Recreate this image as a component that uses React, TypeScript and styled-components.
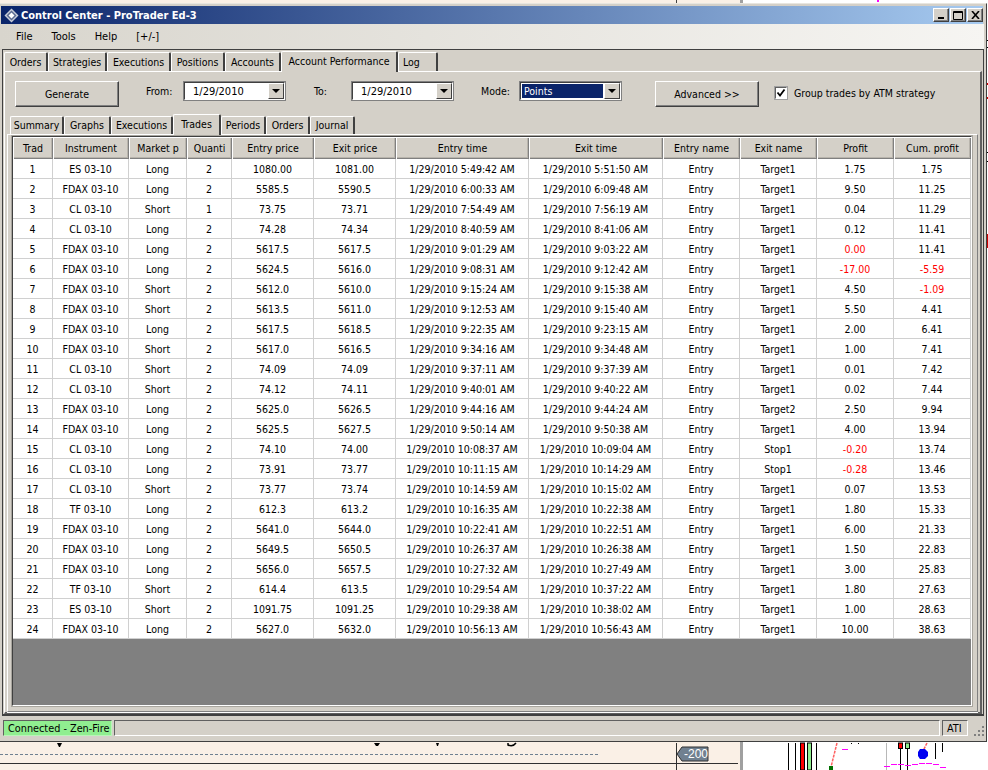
import React from 'react';
import styled, { createGlobalStyle } from 'styled-components';

// Trade rows as shown on the Trades tab
type Trade = [string, string, string, string, string, string, string, string, string, string, string];

const D = '1/29/2010 ';
const trades: Trade[] = [
  ['ES 03-10', 'Long', '2', '1080.00', '1081.00', '5:49:42 AM', '5:51:50 AM', 'Entry', 'Target1', '1.75', '1.75'],
  ['FDAX 03-10', 'Long', '2', '5585.5', '5590.5', '6:00:33 AM', '6:09:48 AM', 'Entry', 'Target1', '9.50', '11.25'],
  ['CL 03-10', 'Short', '1', '73.75', '73.71', '7:54:49 AM', '7:56:19 AM', 'Entry', 'Target1', '0.04', '11.29'],
  ['CL 03-10', 'Long', '2', '74.28', '74.34', '8:40:59 AM', '8:41:06 AM', 'Entry', 'Target1', '0.12', '11.41'],
  ['FDAX 03-10', 'Long', '2', '5617.5', '5617.5', '9:01:29 AM', '9:03:22 AM', 'Entry', 'Target1', '0.00', '11.41'],
  ['FDAX 03-10', 'Long', '2', '5624.5', '5616.0', '9:08:31 AM', '9:12:42 AM', 'Entry', 'Target1', '-17.00', '-5.59'],
  ['FDAX 03-10', 'Short', '2', '5612.0', '5610.0', '9:15:24 AM', '9:15:38 AM', 'Entry', 'Target1', '4.50', '-1.09'],
  ['FDAX 03-10', 'Short', '2', '5613.5', '5611.0', '9:12:53 AM', '9:15:40 AM', 'Entry', 'Target1', '5.50', '4.41'],
  ['FDAX 03-10', 'Long', '2', '5617.5', '5618.5', '9:22:35 AM', '9:23:15 AM', 'Entry', 'Target1', '2.00', '6.41'],
  ['FDAX 03-10', 'Short', '2', '5617.0', '5616.5', '9:34:16 AM', '9:34:48 AM', 'Entry', 'Target1', '1.00', '7.41'],
  ['CL 03-10', 'Short', '2', '74.09', '74.09', '9:37:11 AM', '9:37:39 AM', 'Entry', 'Target1', '0.01', '7.42'],
  ['CL 03-10', 'Short', '2', '74.12', '74.11', '9:40:01 AM', '9:40:22 AM', 'Entry', 'Target1', '0.02', '7.44'],
  ['FDAX 03-10', 'Long', '2', '5625.0', '5626.5', '9:44:16 AM', '9:44:24 AM', 'Entry', 'Target2', '2.50', '9.94'],
  ['FDAX 03-10', 'Long', '2', '5625.5', '5627.5', '9:50:14 AM', '9:50:38 AM', 'Entry', 'Target1', '4.00', '13.94'],
  ['CL 03-10', 'Long', '2', '74.10', '74.00', '10:08:37 AM', '10:09:04 AM', 'Entry', 'Stop1', '-0.20', '13.74'],
  ['CL 03-10', 'Long', '2', '73.91', '73.77', '10:11:15 AM', '10:14:29 AM', 'Entry', 'Stop1', '-0.28', '13.46'],
  ['CL 03-10', 'Short', '2', '73.77', '73.74', '10:14:59 AM', '10:15:02 AM', 'Entry', 'Target1', '0.07', '13.53'],
  ['TF 03-10', 'Long', '2', '612.3', '613.2', '10:16:35 AM', '10:22:38 AM', 'Entry', 'Target1', '1.80', '15.33'],
  ['FDAX 03-10', 'Long', '2', '5641.0', '5644.0', '10:22:41 AM', '10:22:51 AM', 'Entry', 'Target1', '6.00', '21.33'],
  ['FDAX 03-10', 'Long', '2', '5649.5', '5650.5', '10:26:37 AM', '10:26:38 AM', 'Entry', 'Target1', '1.50', '22.83'],
  ['FDAX 03-10', 'Long', '2', '5656.0', '5657.5', '10:27:32 AM', '10:27:49 AM', 'Entry', 'Target1', '3.00', '25.83'],
  ['TF 03-10', 'Short', '2', '614.4', '613.5', '10:29:54 AM', '10:37:22 AM', 'Entry', 'Target1', '1.80', '27.63'],
  ['ES 03-10', 'Short', '2', '1091.75', '1091.25', '10:29:38 AM', '10:38:02 AM', 'Entry', 'Target1', '1.00', '28.63'],
  ['FDAX 03-10', 'Long', '2', '5627.0', '5632.0', '10:56:13 AM', '10:56:43 AM', 'Entry', 'Target1', '10.00', '38.63'],
];

const columns = ['Trad', 'Instrument', 'Market p', 'Quanti', 'Entry price', 'Exit price', 'Entry time', 'Exit time', 'Entry name', 'Exit name', 'Profit', 'Cum. profit'];
const outerTabs = [['Orders', 44], ['Strategies', 59], ['Executions', 64], ['Positions', 54], ['Accounts', 56]] as const;
const innerLeft = [['Summary', 54], ['Graphs', 47], ['Executions', 62]] as const;
const innerRight = [['Periods', 45], ['Orders', 44], ['Journal', 45]] as const;

const GlobalStyle = createGlobalStyle`
  html, body {
    margin: 0;
    padding: 0;
    background: #fff;
    overflow: hidden;
  }
  * {
    box-sizing: border-box;
  }
`;

const Desktop = styled.div`
  position: relative;
  width: 988px;
  height: 770px;
  overflow: hidden;
  font-family: 'DejaVu Sans Condensed', 'Liberation Sans', sans-serif;
  font-size: 10.5px;
  color: #000;
`;

const Backdrop = styled.svg`
  position: absolute;
  left: 0;
  top: 0;
`;

const Window = styled.div`
  position: absolute;
  left: 0;
  top: 3px;
  width: 987px;
  height: 739px;
  display: flex;
  flex-direction: column;
  background: #d4d0c8;
  border-top: 1px solid #e8e6e0;
  border-right: 1px solid #404040;
  border-bottom: 1px solid #404040;
`;

const TitleBar = styled.div`
  height: 18px;
  margin: 2px 3px 0 1px;
  padding-left: 3px;
  display: flex;
  align-items: center;
  gap: 2px;
  background: linear-gradient(to right, #0a246a, #a6caf0);
  color: #fff;
  font-weight: bold;
  font-size: 11px;
`;

const TitleText = styled.span`
  flex: 1;
`;

const CaptionButtons = styled.div`
  display: flex;
  gap: 1px;
`;

const CaptionButton = styled.button`
  width: 16px;
  height: 14px;
  padding: 0;
  display: flex;
  align-items: center;
  justify-content: center;
  background: #d4d0c8;
  border: 1px solid;
  border-color: #fff #404040 #404040 #fff;
  box-shadow: inset -1px -1px 0 #808080;
`;

const MenuBar = styled.div`
  height: 25px;
  margin-right: 2px;
  padding-left: 16px;
  display: flex;
  align-items: center;
  gap: 19px;
  background: linear-gradient(to right, #d8d5cd, #f6f5f2);
  font-size: 11px;
`;

const MenuItem = styled.span`
  padding-bottom: 1px;
`;

const OuterFrame = styled.div`
  flex: 1;
  margin: 0 2px 0 2px;
  min-height: 0;
  display: flex;
  flex-direction: column;
  border: 1px solid #404040;
  border-bottom-width: 2px;
`;

const TabStrip = styled.div<{ $height: number; $pad: number }>`
  height: ${(p) => p.$height}px;
  padding-left: ${(p) => p.$pad}px;
  display: flex;
  align-items: flex-end;
  flex-shrink: 0;
`;

const Tab = styled.div<{ $w: number; $active?: boolean; $h: number; $lift?: number; $start?: boolean }>`
  width: ${(p) => p.$w}px;
  height: ${(p) => p.$h}px;
  display: flex;
  align-items: center;
  justify-content: ${(p) => (p.$start ? 'flex-start' : 'center')};
  padding-left: ${(p) => (p.$start ? 4 : 0)}px;
  padding-bottom: ${(p) => p.$lift ?? 0}px;
  background: #d4d0c8;
  border-top: 1px solid #fff;
  border-left: 1px solid #fff;
  border-right: 2px solid #404040;
  border-radius: 2px 2px 0 0;
  position: relative;
  z-index: ${(p) => (p.$active ? 1 : 0)};
  margin-bottom: ${(p) => (p.$active ? -1 : 0)}px;
  white-space: nowrap;
`;

const OuterPanel = styled.div`
  flex: 1;
  min-height: 0;
  margin: 0 1px;
  display: flex;
  flex-direction: column;
  border-top: 1px solid #fff;
  border-left: 1px solid #fff;
  border-right: 2px solid #606060;
  border-bottom: 2px solid #606060;
`;

const Toolbar = styled.div`
  height: 41px;
  padding: 9px 0 0 10px;
  display: flex;
  align-items: flex-start;
  flex-shrink: 0;
`;

const PushButton = styled.button<{ $left?: number }>`
  width: 104px;
  height: 26px;
  margin-left: ${(p) => p.$left ?? 0}px;
  padding: 0;
  background: #d4d0c8;
  font: inherit;
  color: #000;
  border: 1px solid;
  border-color: #fff #404040 #404040 #fff;
  box-shadow: inset -1px -1px 0 #808080;
`;

const FieldLabel = styled.span<{ $left: number; $width: number }>`
  width: ${(p) => p.$width}px;
  margin-left: ${(p) => p.$left}px;
  line-height: 20px;
`;

const Combo = styled.div<{ $width: number }>`
  width: ${(p) => p.$width}px;
  height: 20px;
  display: flex;
  align-items: stretch;
  background: #fff;
  border: 2px solid;
  border-color: #404040 #fff #fff #404040;
  outline: 1px solid #808080;
  outline-offset: -1px;
`;

const ComboValue = styled.span<{ $selected?: boolean }>`
  flex: 1;
  margin: ${(p) => (p.$selected ? '1px' : 0)};
  padding-left: ${(p) => (p.$selected ? 2 : 8)}px;
  line-height: ${(p) => (p.$selected ? 14 : 17)}px;
  font-size: ${(p) => (p.$selected ? 10.5 : 11)}px;
  color: ${(p) => (p.$selected ? '#fff' : '#000')};
  background: ${(p) => (p.$selected ? '#0a246a' : '#fff')};
`;

const ComboArrow = styled.span`
  width: 16px;
  display: flex;
  align-items: center;
  justify-content: center;
  background: #d4d0c8;
  border: 1px solid;
  border-color: #fff #404040 #404040 #fff;
  &::after {
    content: '';
    border-style: solid;
    border-width: 4px 4px 0 4px;
    border-color: #000 transparent transparent transparent;
  }
`;

const CheckRow = styled.label`
  margin: 6px 0 0 16px;
  display: flex;
  align-items: center;
  gap: 7px;
`;

const CheckBox = styled.span`
  width: 12px;
  height: 12px;
  display: flex;
  align-items: center;
  justify-content: center;
  background: #fff;
  border: 1px solid;
  border-color: #606060 #fff #fff #606060;
  outline: 1px solid #a0a0a0;
`;

const InnerPanel = styled.div`
  flex: 1;
  min-height: 0;
  margin: 0 2px 0 2px;
  padding: 1px 1px 1px 0;
  display: flex;
  flex-direction: column;
  border: 1px solid;
  border-color: #fff #808080 #808080 #fff;
  box-shadow: 0 1px 0 #fff;
`;

const GridFrame = styled.div`
  flex: 1;
  min-height: 0;
  margin: 0 4px 4px 4px;
  display: flex;
  flex-direction: column;
  background: #808080;
  border: 1px solid;
  border-color: #404040 #fff #fff #404040;
  outline: 1px solid #a8a59e;
`;

const GridRow = styled.div`
  display: grid;
  grid-template-columns: 40px 76px 58px 45px 82px 82px 133px 134px 77px 77px 77px 77px;
`;

const HeaderCell = styled.div`
  height: 22px;
  line-height: 22px;
  text-align: center;
  overflow: hidden;
  white-space: nowrap;
  background: #d4d0c8;
  box-shadow: inset 1px 1px 0 #fff, inset -1px -1px 0 #808080, inset -2px -2px 0 #b8b4ac;
`;

const Cell = styled.div<{ $loss?: boolean }>`
  height: 20px;
  line-height: 20px;
  text-align: center;
  white-space: nowrap;
  overflow: hidden;
  background: #fff;
  color: ${(p) => (p.$loss ? '#f00' : '#000')};
  border-right: 1px solid #d0d0d0;
  border-bottom: 1px solid #d0d0d0;
`;

const StatusBar = styled.div`
  height: 25px;
  padding: 4px 0 0 3px;
  display: flex;
  align-items: flex-start;
  flex-shrink: 0;
`;

const StatusPane = styled.div<{ $width?: number; $green?: boolean }>`
  ${(p) => (p.$width ? `width: ${p.$width}px;` : 'flex: 1;')}
  height: 16px;
  margin-right: 2px;
  padding: 0 4px;
  line-height: 15px;
  font-size: 10.8px;
  white-space: nowrap;
  background: ${(p) => (p.$green ? '#90ee90' : '#d4d0c8')};
  border: 1px solid;
  border-color: #606060 ${(p) => (p.$green ? '#b8f5b8' : '#fff')} ${(p) => (p.$green ? '#b8f5b8' : '#fff')} #606060;
`;

const Grip = styled.svg`
  margin: 6px 0 0 2px;
  flex-shrink: 0;
`;

const Logo = () => (
  <svg width="15" height="15" viewBox="0 0 15 15">
    <polygon points="7.5,0.5 14.5,7.5 7.5,14.5 0.5,7.5" fill="#c8cdd8" />
    <polygon points="7.5,2.5 12.5,7.5 7.5,12.5 2.5,7.5" fill="#5a6a90" />
    <polygon points="7.5,4.5 10.5,7.5 7.5,10.5 4.5,7.5" fill="#fff" />
  </svg>
);

const Chart = () => (
  <Backdrop width="988" height="770" viewBox="0 0 988 770">
    <rect width="740" height="770" fill="#faf0e6" />
    <rect x="740" width="3" height="770" fill="#a0a0a0" />
    <rect x="743" width="245" height="770" fill="#fff" />
    <rect x="676" y="0" width="1" height="3" fill="#404040" />
    <rect x="877" y="0" width="2" height="2" fill="#f0f" />
    <g fill="#000">
      <rect x="987" y="40" width="1" height="1" />
      <rect x="987" y="47" width="1" height="1" />
      <rect x="987" y="161" width="1" height="1" />
      <rect x="987" y="152" width="1" height="1" />
    </g>
    <rect x="987" y="83" width="1" height="2" fill="#c00" />
    <rect x="987" y="97" width="1" height="2" fill="#c00" />
    <rect x="987" y="234" width="1" height="14" fill="#c00" />

    <line x1="0" y1="754.5" x2="598" y2="754.5" stroke="#6f8090" strokeDasharray="3 2" />
    <rect x="0" y="763" width="738" height="1" fill="#303030" />
    <rect x="676" y="743" width="1" height="27" fill="#303030" />
    <polygon points="57,743 62,743 60,747 59,747" fill="#000" />
    <polygon points="374,743 380,743 378,746 376,746" fill="#000" />
    <polygon points="436,743 439,743 438,746 437,746" fill="#000" />
    <path d="M508 743 v2 q5 2 8 -2" fill="none" stroke="#000" strokeWidth="1.5" />

    <polygon points="677,754 682,747 708,747 708,761 682,761" fill="#708090" stroke="#303030" />
    <text x="684" y="758" fill="#fff" fontSize="12" fontFamily="Liberation Sans">-200</text>

    <g fill="#000">
      <rect x="788" y="743" width="1" height="27" />
      <rect x="795" y="743" width="1" height="27" />
      <rect x="816" y="743" width="1" height="27" />
      <rect x="851" y="743" width="1" height="1" />
      <rect x="858" y="743" width="1" height="1" />
      <rect x="900" y="743" width="1" height="27" />
      <rect x="907" y="743" width="1" height="27" />
      <rect x="935" y="743" width="1" height="16" />
      <rect x="942" y="743" width="1" height="9" />
    </g>
    <rect x="800.5" y="743" width="4" height="27" fill="#f00" stroke="#000" />
    <rect x="807.5" y="743" width="4" height="27" fill="#90ee90" stroke="#000" />
    <rect x="886" y="743" width="1" height="27" fill="#b8b8b8" />
    <rect x="898.5" y="743" width="4" height="5.5" fill="#f00" stroke="#000" />
    <rect x="905.5" y="743" width="4" height="5.5" fill="#90ee90" stroke="#000" />
    <line x1="837" y1="743" x2="831" y2="767" stroke="#ff6060" strokeWidth="1.5" strokeDasharray="3 1" />
    <rect x="829" y="766" width="4" height="4" fill="#007000" />
    <line x1="927" y1="743" x2="923" y2="751" stroke="#ff6060" strokeWidth="1.5" strokeDasharray="3 1" />
    <polygon points="920,749 925,749 928,752 928,756 925,759 920,759 918,756 918,752" fill="#0000f0" />
    <g fill="#f0f">
      <rect x="842" y="749" width="6" height="1" />
      <rect x="884" y="766" width="6" height="1" />
      <rect x="891" y="764" width="6" height="1" />
      <rect x="898" y="764" width="6" height="1" />
      <rect x="905" y="765" width="6" height="1" />
      <rect x="912" y="764" width="6" height="1" />
      <rect x="919" y="763" width="6" height="1" />
      <rect x="926" y="763" width="6" height="1" />
      <rect x="933" y="764" width="6" height="1" />
      <rect x="940" y="767" width="6" height="1" />
    </g>
  </Backdrop>
);

const App: React.FC = () => (
  <Desktop>
    <GlobalStyle />
    <Chart />
    <Window>
      <TitleBar>
        <Logo />
        <TitleText>Control Center - ProTrader Ed-3</TitleText>
        <CaptionButtons>
          <CaptionButton>
            <svg width="8" height="8" viewBox="0 0 8 8"><rect x="1" y="6" width="6" height="2" fill="#000" /></svg>
          </CaptionButton>
          <CaptionButton>
            <svg width="10" height="9" viewBox="0 0 10 9"><path d="M0.5 0.5h9v8h-9z M0.5 1.5h9" fill="none" stroke="#000" /></svg>
          </CaptionButton>
          <CaptionButton>
            <svg width="9" height="8" viewBox="0 0 9 8"><path d="M1 0l7 8M8 0l-7 8" fill="none" stroke="#000" strokeWidth="1.6" /></svg>
          </CaptionButton>
        </CaptionButtons>
      </TitleBar>
      <MenuBar>
        <MenuItem>File</MenuItem>
        <MenuItem>Tools</MenuItem>
        <MenuItem>Help</MenuItem>
        <MenuItem>[+/-]</MenuItem>
      </MenuBar>
      <OuterFrame>
        <TabStrip $height={21} $pad={1}>
          {outerTabs.map(([label, w]) => (
            <Tab key={label} $w={w} $h={19}>{label}</Tab>
          ))}
          <Tab $w={117} $h={21} $active $lift={3}>Account Performance</Tab>
          <Tab $w={40} $h={19} $start>Log</Tab>
        </TabStrip>
        <OuterPanel>
          <Toolbar>
            <PushButton>Generate</PushButton>
            <FieldLabel $left={27} $width={37}>From:</FieldLabel>
            <Combo $width={103}>
              <ComboValue>1/29/2010</ComboValue>
              <ComboArrow />
            </Combo>
            <FieldLabel $left={28} $width={37}>To:</FieldLabel>
            <Combo $width={103}>
              <ComboValue>1/29/2010</ComboValue>
              <ComboArrow />
            </Combo>
            <FieldLabel $left={27} $width={38}>Mode:</FieldLabel>
            <Combo $width={103}>
              <ComboValue $selected>Points</ComboValue>
              <ComboArrow />
            </Combo>
            <PushButton $left={33}>Advanced &gt;&gt;</PushButton>
            <CheckRow>
              <CheckBox>
                <svg width="10" height="10" viewBox="0 0 10 10"><path d="M1.5 4.5l2.5 3 4.5-6" fill="none" stroke="#000" strokeWidth="1.8" /></svg>
              </CheckBox>
              Group trades by ATM strategy
            </CheckRow>
          </Toolbar>
          <TabStrip $height={21} $pad={5}>
            {innerLeft.map(([label, w]) => (
              <Tab key={label} $w={w} $h={18} $lift={2}>{label}</Tab>
            ))}
            <Tab $w={48} $h={21} $active $lift={3}>Trades</Tab>
            {innerRight.map(([label, w]) => (
              <Tab key={label} $w={w} $h={18} $lift={2}>{label}</Tab>
            ))}
          </TabStrip>
          <InnerPanel>
            <GridFrame>
              <GridRow>
                {columns.map((c) => (
                  <HeaderCell key={c}>{c}</HeaderCell>
                ))}
              </GridRow>
              {trades.map((t, i) => (
                <GridRow key={i}>
                  <Cell>{i + 1}</Cell>
                  <Cell>{t[0]}</Cell>
                  <Cell>{t[1]}</Cell>
                  <Cell>{t[2]}</Cell>
                  <Cell>{t[3]}</Cell>
                  <Cell>{t[4]}</Cell>
                  <Cell>{D + t[5]}</Cell>
                  <Cell>{D + t[6]}</Cell>
                  <Cell>{t[7]}</Cell>
                  <Cell>{t[8]}</Cell>
                  <Cell $loss={t[9].startsWith('-') || t[9] === '0.00'}>{t[9]}</Cell>
                  <Cell $loss={t[10].startsWith('-')}>{t[10]}</Cell>
                </GridRow>
              ))}
            </GridFrame>
          </InnerPanel>
        </OuterPanel>
      </OuterFrame>
      <StatusBar>
        <StatusPane $width={109} $green>Connected - Zen-Fire</StatusPane>
        <StatusPane />
        <StatusPane $width={26}>ATI</StatusPane>
        <Grip width="14" height="11" viewBox="0 0 14 11">
          <g fill="#808080">
            <rect x="10" y="0" width="2" height="2" />
            <rect x="6" y="4" width="2" height="2" />
            <rect x="10" y="4" width="2" height="2" />
            <rect x="2" y="8" width="2" height="2" />
            <rect x="6" y="8" width="2" height="2" />
            <rect x="10" y="8" width="2" height="2" />
          </g>
        </Grip>
      </StatusBar>
    </Window>
  </Desktop>
);

export default App;
